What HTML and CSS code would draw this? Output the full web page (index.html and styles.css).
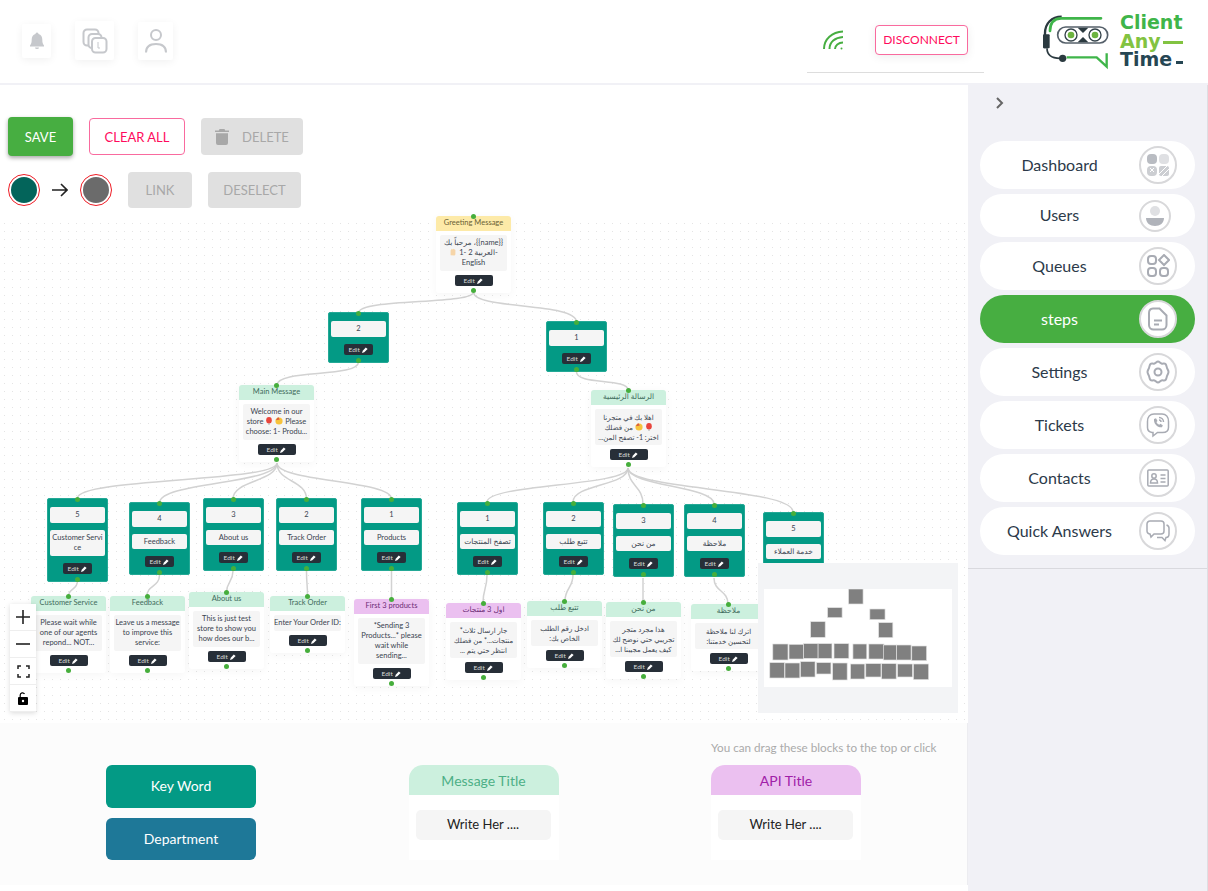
FILE: index.html
```html
<!DOCTYPE html>
<html>

<head>
    <meta charset="UTF-8">
    <title>Client Any Time - Steps</title>
    <link rel="stylesheet" href="styles.css">
</head>

<body>
    <header class="topbar">
        <div class="top-icons">
            <div class="top-icon bell-box">
                <svg width="20" height="20" viewBox="0 0 20 20"><path fill="#c6c8cc" d="M10 1.5a1.5 1.5 0 0 1 1.5 1.6c2.6.7 3.8 2.9 3.8 5.5 0 2.8.4 4.3 1.700 5.9v.9H3v-.9c1.300-1.600 1.700-3.100 1.700-5.900 0-2.600 1.200-4.800 3.800-5.500A1.500 1.500 0 0 1 10 1.500zM8 16.500h4a2 1.500 0 0 1-4 0z"/></svg>
            </div>
            <div class="top-icon copy-box">
                <svg width="26" height="26" viewBox="0 0 26 26" fill="none" stroke="#c6c8cc" stroke-width="2"><path d="M7 17.500H5a3.500 3.500 0 0 1-3.500-3.500V5A3.500 3.500 0 0 1 5 1.500h8A3.500 3.500 0 0 1 16.500 5v1"/><rect x="6.500" y="6" width="13" height="14" rx="3.500"/><rect x="10" y="10" width="14.500" height="14.500" rx="3.500" fill="#fff"/><path stroke-width="1" d="M16 14v6h2"/></svg>
            </div>
            <div class="top-icon user-box">
                <svg width="24" height="26" viewBox="0 0 24 26" fill="none" stroke="#c6c8cc" stroke-width="2"><circle cx="12" cy="7" r="5"/><path d="M2 24.500c0-5.500 3.500-8.500 10-8.500s10 3 10 8.500"/></svg>
            </div>
        </div>
        <div class="conn-box">
            <svg class="wifi" width="20" height="20" viewBox="0 0 20 20" fill="none" stroke="#47ae41" stroke-width="2"><path d="M1 19C1 9 9 2 20 1.500"/><path d="M6.500 19C6.500 12 12 7.500 20 7"/><path d="M12 19c0-3.500 3.500-6.500 8-6.500"/><circle cx="18.500" cy="18.500" r="1" fill="#47ae41" stroke="none"/></svg>
            <button class="btn-outline disconnect">DISCONNECT</button>
        </div>
        <div class="logo">
            <svg width="80" height="70" viewBox="0 0 240 210" fill="none">
                <path d="M80 35C50 35 30 55 30 85V130" stroke="#2b3a40" stroke-width="7"/>
                <rect x="24" y="88" width="20" height="42" rx="3" fill="#2b3a40"/>
                <path d="M36 130C36 150 50 160 75 160" stroke="#2b3a40" stroke-width="5"/>
                <circle cx="83" cy="160" r="11" fill="#2b3a40"/>
                <path d="M45 78C45 55 55 41 78 40H198" stroke="#3fb54a" stroke-width="8" stroke-linecap="round"/>
                <path d="M95 157H185L215 185V145" stroke="#3fb54a" stroke-width="7"/>
                <rect x="68" y="66" width="150" height="48" rx="24" stroke="#55606a" stroke-width="5" fill="#fff"/>
                <path d="M128 68h32l-16 16zM128 112h32l-16-16z" fill="#2b3a40"/>
                <circle cx="108" cy="90" r="18" fill="#fff" stroke="#33424a" stroke-width="4"/>
                <circle cx="180" cy="90" r="18" fill="#fff" stroke="#33424a" stroke-width="4"/>
                <circle cx="108" cy="90" r="10" fill="#6cb33f"/>
                <circle cx="180" cy="90" r="10" fill="#6cb33f"/>
            </svg>
            <div class="logo-text">
                <div class="logo-client">Client</div>
                <div class="logo-any">Any<span class="logo-bar"></span></div>
                <div class="logo-time">Time<span class="logo-dash"></span></div>
            </div>
        </div>
    </header>

    <div class="page">
        <main class="workspace">
            <section class="toolbar">
                <div class="tool-row">
                    <button class="btn-save">SAVE</button>
                    <button class="btn-outline clear">CLEAR ALL</button>
                    <button class="btn-off delete">
                        <svg width="14" height="16" viewBox="0 0 14 16" fill="#a8a8a8"><path d="M4.500 0h5l.7 1.500H14V3H0V1.500h3.800zM1 4.200h12V14a2 2 0 0 1-2 2H3a2 2 0 0 1-2-2z"/></svg>
                        DELETE
                    </button>
                </div>
                <div class="tool-row second">
                    <div class="pick-group">
                        <span class="pick pick-from"></span>
                        <svg width="16" height="14" viewBox="0 0 16 14" fill="none" stroke="#222" stroke-width="1.600"><path d="M0 7h15M9 1l6 6-6 6"/></svg>
                        <span class="pick pick-to"></span>
                    </div>
                    <button class="btn-off link">LINK</button>
                    <button class="btn-off deselect">DESELECT</button>
                </div>
            </section>

            <section class="canvas">
                <svg class="edges" width="968" height="504" viewBox="0 219 968 504" fill="none" stroke="#d2d2d2" stroke-width="1.500">
                    <path d="M473.500 292C473.500 305 358.500 298 358.500 313"/>
                    <path d="M473.500 292C473.500 310 576.500 302 576.500 322"/>
                    <path d="M358.500 362C358.500 378 277 369 277 385"/>
                    <path d="M576.500 372C576.500 385 628 378 628 390"/>
                    <path d="M277 463C277 482 77.500 478 77.500 498"/>
                    <path d="M277 463C277 484 159.500 482 159.500 503"/>
                    <path d="M277 463C277 482 233 480 233 499"/>
                    <path d="M277 463C277 482 306.500 480 306.500 499"/>
                    <path d="M277 463C277 482 391.500 480 391.500 499"/>
                    <path d="M628 468C628 486 487 484 487 502"/>
                    <path d="M628 468C628 486 573 484 573 502"/>
                    <path d="M628 468C628 486 643 486 643 504"/>
                    <path d="M628 468C628 486 714 486 714 504"/>
                    <path d="M628 468C628 490 793 488 793 512"/>
                    <path d="M77.500 581C77.500 590 68.500 588 68.500 596"/>
                    <path d="M159.500 575C159.500 587 147 585 147 596"/>
                    <path d="M233 571C233 582 226.500 582 226.500 592"/>
                    <path d="M306.500 571C306.500 584 307.500 584 307.500 596"/>
                    <path d="M391.500 571V599"/>
                    <path d="M487 575C487 589 483 589 483 603"/>
                    <path d="M573 575C573 588 565 588 565 601"/>
                    <path d="M643 578V602"/>
                    <path d="M714 578C714 592 728 590 728 604"/>
                </svg>

                <div class="node msg" style="left:436px;top:-3px">
                    <div class="msg-head yellow">Greeting Message</div>
                    <div class="msg-text">مرحباً بك ،{{name}}<br><svg class="emo" viewBox="0 0 10 10"><path fill="#f6d5a8" d="M2 9V3l1.500-2 1 1 1.500-1 1 1 1 .5V8L7 9.500z"/></svg> 1- 2 العربية-<br>English</div>
                    <button class="edit-btn">Edit <svg class="pen" viewBox="0 0 8 8"><path d="M0 8l1-3 4-4.500 2.500 2L3 7z"/></svg></button>
                    <i class="handle top"></i><i class="handle bottom"></i>
                </div>

                <div class="node key" style="left:328px;top:93px">
                    <div class="key-field">2</div>
                    <button class="edit-btn">Edit <svg class="pen" viewBox="0 0 8 8"><path d="M0 8l1-3 4-4.500 2.500 2L3 7z"/></svg></button>
                    <i class="handle top"></i><i class="handle bottom"></i>
                </div>
                <div class="node key" style="left:546px;top:102px">
                    <div class="key-field">1</div>
                    <button class="edit-btn">Edit <svg class="pen" viewBox="0 0 8 8"><path d="M0 8l1-3 4-4.500 2.500 2L3 7z"/></svg></button>
                    <i class="handle top"></i><i class="handle bottom"></i>
                </div>

                <div class="node msg" style="left:239px;top:166px">
                    <div class="msg-head green">Main Message</div>
                    <div class="msg-text">Welcome in our<br>store <svg class="emo" viewBox="0 0 10 10"><ellipse cx="5" cy="4" rx="3.500" ry="4" fill="#e8453c"/><path d="M5 8v2" stroke="#999"/></svg> <svg class="emo" viewBox="0 0 10 10"><circle cx="5" cy="5" r="4.500" fill="#f7c33c"/><path d="M1 4l3-4 2 3z" fill="#d9573f"/></svg> Please<br>choose: 1- Produ...</div>
                    <button class="edit-btn">Edit <svg class="pen" viewBox="0 0 8 8"><path d="M0 8l1-3 4-4.500 2.500 2L3 7z"/></svg></button>
                    <i class="handle top"></i><i class="handle bottom"></i>
                </div>
                <div class="node msg" style="left:591px;top:171px">
                    <div class="msg-head green">الرسالة الرئيسية</div>
                    <div class="msg-text" dir="rtl">اهلا بك في متجرنا<br><svg class="emo" viewBox="0 0 10 10"><ellipse cx="5" cy="4" rx="3.500" ry="4" fill="#e8453c"/><path d="M5 8v2" stroke="#999"/></svg> <svg class="emo" viewBox="0 0 10 10"><circle cx="5" cy="5" r="4.500" fill="#f7c33c"/><path d="M1 4l3-4 2 3z" fill="#d9573f"/></svg> من فضلك<br>اختر: 1- تصفح المن...</div>
                    <button class="edit-btn">Edit <svg class="pen" viewBox="0 0 8 8"><path d="M0 8l1-3 4-4.500 2.500 2L3 7z"/></svg></button>
                    <i class="handle top"></i><i class="handle bottom"></i>
                </div>

                <div class="node key" style="left:47px;top:279px">
                    <div class="key-field">5</div>
                    <div class="key-field tall">Customer Servi<br>ce</div>
                    <button class="edit-btn">Edit <svg class="pen" viewBox="0 0 8 8"><path d="M0 8l1-3 4-4.500 2.500 2L3 7z"/></svg></button>
                    <i class="handle top"></i><i class="handle bottom"></i>
                </div>
                <div class="node key" style="left:129px;top:283px">
                    <div class="key-field">4</div>
                    <div class="key-field">Feedback</div>
                    <button class="edit-btn">Edit <svg class="pen" viewBox="0 0 8 8"><path d="M0 8l1-3 4-4.500 2.500 2L3 7z"/></svg></button>
                    <i class="handle top"></i><i class="handle bottom"></i>
                </div>
                <div class="node key" style="left:203px;top:279px">
                    <div class="key-field">3</div>
                    <div class="key-field">About us</div>
                    <button class="edit-btn">Edit <svg class="pen" viewBox="0 0 8 8"><path d="M0 8l1-3 4-4.500 2.500 2L3 7z"/></svg></button>
                    <i class="handle top"></i><i class="handle bottom"></i>
                </div>
                <div class="node key" style="left:276px;top:279px">
                    <div class="key-field">2</div>
                    <div class="key-field">Track Order</div>
                    <button class="edit-btn">Edit <svg class="pen" viewBox="0 0 8 8"><path d="M0 8l1-3 4-4.500 2.500 2L3 7z"/></svg></button>
                    <i class="handle top"></i><i class="handle bottom"></i>
                </div>
                <div class="node key" style="left:361px;top:279px">
                    <div class="key-field">1</div>
                    <div class="key-field">Products</div>
                    <button class="edit-btn">Edit <svg class="pen" viewBox="0 0 8 8"><path d="M0 8l1-3 4-4.500 2.500 2L3 7z"/></svg></button>
                    <i class="handle top"></i><i class="handle bottom"></i>
                </div>

                <div class="node key" style="left:457px;top:283px">
                    <div class="key-field">1</div>
                    <div class="key-field">تصفح المنتجات</div>
                    <button class="edit-btn">Edit <svg class="pen" viewBox="0 0 8 8"><path d="M0 8l1-3 4-4.500 2.500 2L3 7z"/></svg></button>
                    <i class="handle top"></i><i class="handle bottom"></i>
                </div>
                <div class="node key" style="left:543px;top:283px">
                    <div class="key-field">2</div>
                    <div class="key-field">تتبع طلب</div>
                    <button class="edit-btn">Edit <svg class="pen" viewBox="0 0 8 8"><path d="M0 8l1-3 4-4.500 2.500 2L3 7z"/></svg></button>
                    <i class="handle top"></i><i class="handle bottom"></i>
                </div>
                <div class="node key" style="left:613px;top:285px">
                    <div class="key-field">3</div>
                    <div class="key-field">من نحن</div>
                    <button class="edit-btn">Edit <svg class="pen" viewBox="0 0 8 8"><path d="M0 8l1-3 4-4.500 2.500 2L3 7z"/></svg></button>
                    <i class="handle top"></i><i class="handle bottom"></i>
                </div>
                <div class="node key" style="left:684px;top:285px">
                    <div class="key-field">4</div>
                    <div class="key-field">ملاحظة</div>
                    <button class="edit-btn">Edit <svg class="pen" viewBox="0 0 8 8"><path d="M0 8l1-3 4-4.500 2.500 2L3 7z"/></svg></button>
                    <i class="handle top"></i><i class="handle bottom"></i>
                </div>
                <div class="node key" style="left:763px;top:293px">
                    <div class="key-field">5</div>
                    <div class="key-field">خدمة العملاء</div>
                    <button class="edit-btn">Edit <svg class="pen" viewBox="0 0 8 8"><path d="M0 8l1-3 4-4.500 2.500 2L3 7z"/></svg></button>
                    <i class="handle top"></i><i class="handle bottom"></i>
                </div>

                <div class="node msg" style="left:31px;top:377px">
                    <div class="msg-head green">Customer Service</div>
                    <div class="msg-text">Please wait while<br>one of our agents<br>repond... NOT...</div>
                    <button class="edit-btn">Edit <svg class="pen" viewBox="0 0 8 8"><path d="M0 8l1-3 4-4.500 2.500 2L3 7z"/></svg></button>
                    <i class="handle top"></i><i class="handle bottom"></i>
                </div>
                <div class="node msg" style="left:110px;top:377px">
                    <div class="msg-head green">Feedback</div>
                    <div class="msg-text">Leave us a message<br>to improve this<br>service:</div>
                    <button class="edit-btn">Edit <svg class="pen" viewBox="0 0 8 8"><path d="M0 8l1-3 4-4.500 2.500 2L3 7z"/></svg></button>
                    <i class="handle top"></i><i class="handle bottom"></i>
                </div>
                <div class="node msg" style="left:189px;top:373px">
                    <div class="msg-head green">About us</div>
                    <div class="msg-text">This is just test<br>store to show you<br>how does our b...</div>
                    <button class="edit-btn">Edit <svg class="pen" viewBox="0 0 8 8"><path d="M0 8l1-3 4-4.500 2.500 2L3 7z"/></svg></button>
                    <i class="handle top"></i><i class="handle bottom"></i>
                </div>
                <div class="node msg" style="left:270px;top:377px">
                    <div class="msg-head green">Track Order</div>
                    <div class="msg-text">Enter Your Order ID:</div>
                    <button class="edit-btn">Edit <svg class="pen" viewBox="0 0 8 8"><path d="M0 8l1-3 4-4.500 2.500 2L3 7z"/></svg></button>
                    <i class="handle top"></i><i class="handle bottom"></i>
                </div>
                <div class="node msg" style="left:354px;top:380px">
                    <div class="msg-head purple">First 3 products</div>
                    <div class="msg-text">*Sending 3<br>Products...* please<br>wait while<br>sending...</div>
                    <button class="edit-btn">Edit <svg class="pen" viewBox="0 0 8 8"><path d="M0 8l1-3 4-4.500 2.500 2L3 7z"/></svg></button>
                    <i class="handle top"></i><i class="handle bottom"></i>
                </div>
                <div class="node msg" style="left:446px;top:384px">
                    <div class="msg-head purple">اول 3 منتجات</div>
                    <div class="msg-text" dir="rtl">جار ارسال ثلاث*<br>منتجات...* من فضلك<br>انتظر حتي يتم ...</div>
                    <button class="edit-btn">Edit <svg class="pen" viewBox="0 0 8 8"><path d="M0 8l1-3 4-4.500 2.500 2L3 7z"/></svg></button>
                    <i class="handle top"></i><i class="handle bottom"></i>
                </div>
                <div class="node msg" style="left:527px;top:382px">
                    <div class="msg-head green">تتبع طلب</div>
                    <div class="msg-text" dir="rtl">ادخل رقم الطلب<br>الخاص بك:</div>
                    <button class="edit-btn">Edit <svg class="pen" viewBox="0 0 8 8"><path d="M0 8l1-3 4-4.500 2.500 2L3 7z"/></svg></button>
                    <i class="handle top"></i><i class="handle bottom"></i>
                </div>
                <div class="node msg" style="left:606px;top:383px">
                    <div class="msg-head green">من نحن</div>
                    <div class="msg-text" dir="rtl">هذا مجرد متجر<br>تجريبي حتي نوضح لك<br>كيف يعمل مجيبنا ا...</div>
                    <button class="edit-btn">Edit <svg class="pen" viewBox="0 0 8 8"><path d="M0 8l1-3 4-4.500 2.500 2L3 7z"/></svg></button>
                    <i class="handle top"></i><i class="handle bottom"></i>
                </div>
                <div class="node msg" style="left:691px;top:385px">
                    <div class="msg-head green">ملاحظة</div>
                    <div class="msg-text" dir="rtl">اترك لنا ملاحظة<br>لتحسين خدمتنا:</div>
                    <button class="edit-btn">Edit <svg class="pen" viewBox="0 0 8 8"><path d="M0 8l1-3 4-4.500 2.500 2L3 7z"/></svg></button>
                    <i class="handle top"></i><i class="handle bottom"></i>
                </div>

                <div class="controls">
                    <button class="ctl">
                        <svg width="14" height="14" viewBox="0 0 14 14" stroke="#222" stroke-width="1.600"><path d="M7 0v14M0 7h14"/></svg>
                    </button>
                    <button class="ctl">
                        <svg width="14" height="14" viewBox="0 0 14 14" stroke="#222" stroke-width="1.600"><path d="M0 7h14"/></svg>
                    </button>
                    <button class="ctl">
                        <svg width="13" height="13" viewBox="0 0 13 13" fill="none" stroke="#222" stroke-width="1.500"><path d="M1 4V1h3M9 1h3v3M12 9v3H9M4 12H1V9"/></svg>
                    </button>
                    <button class="ctl">
                        <svg width="10" height="13" viewBox="0 0 10 13"><path d="M2.200 5V3a2.300 2.300 0 0 1 4.300-1" fill="none" stroke="#000" stroke-width="1.200"/><path d="M1 5h8a1 1 0 0 1 1 1v6a1 1 0 0 1-1 1H1a1 1 0 0 1-1-1V6a1 1 0 0 1 1-1z"/><circle cx="5" cy="9" r="1.200" fill="#fff"/></svg>
                    </button>
                </div>

                <div class="minimap">
                    <svg class="mini-view" width="188" height="98" viewBox="959 327 556 294" preserveAspectRatio="none" fill="#808080" stroke="#e2e2e2" stroke-width="2">
                        <rect x="1209" y="327" width="43" height="45"/>
                        <rect x="1147" y="383" width="43" height="30"/>
                        <rect x="1272" y="387" width="45" height="32"/>
                        <rect x="1097" y="425" width="43" height="47"/>
                        <rect x="1298" y="428" width="42" height="45"/>
                        <rect x="985" y="492" width="45" height="48"/>
                        <rect x="1033" y="493" width="43" height="44"/>
                        <rect x="1076" y="491" width="43" height="44"/>
                        <rect x="1119" y="491" width="41" height="44"/>
                        <rect x="1166" y="491" width="44" height="44"/>
                        <rect x="1222" y="492" width="41" height="45"/>
                        <rect x="1269" y="492" width="45" height="45"/>
                        <rect x="1312" y="495" width="39" height="45"/>
                        <rect x="1351" y="495" width="43" height="45"/>
                        <rect x="1396" y="498" width="44" height="44"/>
                        <rect x="976" y="548" width="44" height="46"/>
                        <rect x="1021" y="549" width="44" height="45"/>
                        <rect x="1067" y="545" width="43" height="46"/>
                        <rect x="1114" y="548" width="43" height="34"/>
                        <rect x="1162" y="549" width="43" height="51"/>
                        <rect x="1215" y="552" width="42" height="45"/>
                        <rect x="1260" y="551" width="45" height="40"/>
                        <rect x="1307" y="551" width="43" height="46"/>
                        <rect x="1354" y="552" width="44" height="39"/>
                        <rect x="1401" y="552" width="45" height="47"/>
                    </svg>
                </div>
            </section>

            <section class="palette">
                <p class="hint">You can drag these blocks to the top or click</p>
                <div class="key-blocks">
                    <div class="block-btn keyword">Key Word</div>
                    <div class="block-btn department">Department</div>
                </div>
                <div class="block-card">
                    <div class="card-head green-card">Message Title</div>
                    <div class="card-field">Write Her ....</div>
                </div>
                <div class="block-card">
                    <div class="card-head purple-card">API Title</div>
                    <div class="card-field">Write Her ....</div>
                </div>
            </section>
        </main>

        <aside class="sidebar">
            <div class="side-toggle">
                <svg width="8" height="12" viewBox="0 0 8 12" fill="none" stroke="#666" stroke-width="2"><path d="M1 1l5 5-5 5"/></svg>
            </div>
            <nav class="side-nav">
                <a class="nav-item">
                    <span class="nav-label">Dashboard</span>
                    <span class="nav-icon">
                        <svg width="24" height="24" viewBox="0 0 24 24"><rect x="1" y="1" width="10" height="10" rx="4" fill="#b9bcc2"/><rect x="13" y="1" width="10" height="10" rx="4" fill="#dfe0e3"/><rect x="1" y="13" width="10" height="10" rx="4" fill="#ccced2"/><path d="M4 15l4 4M8 15l-4 4" stroke="#fff"/><rect x="13" y="13" width="10" height="10" rx="2" fill="#ccced2"/><path d="M13 21l8-8M16 23l7-7" stroke="#fff"/></svg>
                    </span>
                </a>
                <a class="nav-item short">
                    <span class="nav-label">Users</span>
                    <span class="nav-icon small">
                        <svg width="20" height="22" viewBox="0 0 20 22"><circle cx="10" cy="6" r="5" fill="#dfe0e3"/><path d="M1 13h18c0 5-4 8-9 8s-9-3-9-8z" fill="#b0b3ba"/></svg>
                    </span>
                </a>
                <a class="nav-item">
                    <span class="nav-label">Queues</span>
                    <span class="nav-icon">
                        <svg width="24" height="24" viewBox="0 0 24 24" fill="none" stroke="#a8abb3" stroke-width="2"><rect x="2" y="2" width="8" height="8" rx="3"/><path d="M18 1l5 5-5 5-5-5z"/><rect x="2" y="14" width="8" height="8" rx="3"/><rect x="14" y="14" width="8" height="8" rx="3"/></svg>
                    </span>
                </a>
                <a class="nav-item active">
                    <span class="nav-label">steps</span>
                    <span class="nav-icon">
                        <svg width="20" height="24" viewBox="0 0 20 24" fill="none" stroke="#a8abb3" stroke-width="2"><path d="M5 1.500h6.500l7 7V18a4.500 4.500 0 0 1-4.500 4.500H5.500A4.500 4.500 0 0 1 1 18V6a4.500 4.500 0 0 1 4-4.500z"/><path d="M6 13.500h8M6 17.500h5"/></svg>
                    </span>
                </a>
                <a class="nav-item">
                    <span class="nav-label">Settings</span>
                    <span class="nav-icon">
                        <svg width="24" height="24" viewBox="0 0 24 24" fill="none" stroke="#a8abb3" stroke-width="2"><path d="M12 1.500c1.500 0 2 1.500 3.500 2s3-.5 4 .5 1 2.500 1.500 4 1.500 2.500 1.500 4-1 2.500-1.500 4-.5 3-1.500 4-2.500 0-4 .5-2 2-3.500 2-2-1.500-3.500-2-3 .5-4-.5-1-2.500-1.500-4-1.500-2.500-1.500-4 1-2.500 1.500-4 .5-3 1.500-4 2.500 0 4-.5 2-2 3.500-2z"/><circle cx="12" cy="12" r="3.500"/></svg>
                    </span>
                </a>
                <a class="nav-item">
                    <span class="nav-label">Tickets</span>
                    <span class="nav-icon">
                        <svg width="24" height="26" viewBox="0 0 24 26" fill="none" stroke="#a8abb3" stroke-width="1.500"><path d="M7 20.500h-1C3 20 1.500 18 1.500 15.500v-6C1.500 5 4 2 8 2h8c4 0 6.500 3 6.500 7.500v6c0 3-2 5-6 5h-5L7 24z"/><path fill="#a8abb3" stroke="none" d="M8 7l2-.7 1.500 2.700-1 1c.5 1.300 1.500 2.300 2.800 2.800l1-1 2.500 1.500-.8 2c-4.500.5-8.500-3.500-8-8.300z"/><path d="M13 5.500c2.500 0 4.500 2 4.500 4.500M13 8c1.200 0 2 .8 2 2"/></svg>
                    </span>
                </a>
                <a class="nav-item">
                    <span class="nav-label">Contacts</span>
                    <span class="nav-icon">
                        <svg width="22" height="18" viewBox="0 0 22 18" fill="none" stroke="#a8abb3" stroke-width="1.500"><rect x=".8" y="1" width="20.400" height="16" rx="1"/><circle cx="7" cy="7" r="2.200"/><path d="M3.500 14c0-3 1.500-4 3.500-4s3.500 1 3.500 4zM13.500 6h5M13.500 9.500h5M13.500 13h5"/></svg>
                    </span>
                </a>
                <a class="nav-item">
                    <span class="nav-label">Quick Answers</span>
                    <span class="nav-icon">
                        <svg width="24" height="22" viewBox="0 0 24 22" fill="none" stroke="#a8abb3" stroke-width="1.500"><path d="M4 1h11a3 3 0 0 1 3 3v7a3 3 0 0 1-3 3H8l-3 3-1-3a3 3 0 0 1-3-3V4a3 3 0 0 1 3-3z"/><path d="M20.500 5c1.500.5 2.500 1.500 2.500 3v6c0 2-1 3.500-3 3.500l-1 3-3-3h-5"/></svg>
                    </span>
                </a>
            </nav>
        </aside>
    </div>
</body>

</html>
```
FILE: styles.css
```css
* {
    box-sizing: border-box;
}

body {
    margin: 0;
    width: 1208px;
    height: 891px;
    overflow: hidden;
    background-color: #fff;
    font-family: Lato, "DejaVu Sans", sans-serif;
    color: #2c3a4a;
}

button {
    font-family: inherit;
    border: none;
    padding: 0;
}

/* header */
.topbar {
    display: flex;
    height: 85px;
    border-bottom: 2px solid #f1f1f6;
}

.top-icons {
    display: flex;
    align-items: flex-start;
    width: 807px;
    padding: 21px 0 0 22px;
}

.top-icon {
    display: flex;
    align-items: center;
    justify-content: center;
    background-color: #fff;
    box-shadow: 0 2px 8px rgba(0, 0, 0, 0.06);
    border-radius: 2px;
}

.bell-box {
    width: 29px;
    height: 34px;
    margin-top: 3px;
}

.copy-box {
    width: 39px;
    height: 39px;
    margin-left: 24px;
}

.user-box {
    width: 35px;
    height: 38px;
    margin-left: 24px;
    margin-top: 1px;
}

.conn-box {
    display: flex;
    align-items: center;
    width: 177px;
    height: 73px;
    padding: 7px 0 0 16px;
    border-bottom: 1px solid #ddd;
}

.disconnect {
    width: 93px;
    height: 30px;
    margin-left: 32px;
    margin-right: -16px;
    font-size: 12px;
    box-shadow: 0 2px 10px rgba(0, 0, 0, 0.07);
    flex-shrink: 0;
}

.logo {
    display: flex;
    padding: 5px 0 0 51px;
    width: 224px;
}

.logo svg {
    flex-shrink: 0;
}

.logo-text {
    width: 63px;
    height: 62px;
    margin-left: 5px;
    padding-top: 8px;
    font-family: "DejaVu Sans", sans-serif;
    font-weight: bold;
    font-size: 19px;
    line-height: 18.5px;
}

.logo-client {
    color: #3fb54a;
}

.logo-any {
    display: flex;
    align-items: center;
    color: #82c341;
}

.logo-bar {
    flex: 1;
    height: 3px;
    margin: 3px 0 0 2px;
    background-color: #82c341;
}

.logo-time {
    display: flex;
    align-items: center;
    color: #264653;
}

.logo-dash {
    width: 7px;
    height: 3px;
    margin: 6px 0 0 auto;
    background-color: #264653;
}

/* page */
.page {
    display: flex;
    height: 806px;
}

.workspace {
    display: flex;
    flex-direction: column;
    width: 968px;
}

.toolbar {
    height: 134px;
    padding: 32px 0 0 8px;
}

.tool-row {
    display: flex;
    align-items: center;
    gap: 16px;
    font-size: 13px;
}

.second {
    margin-top: 16px;
}

.btn-save {
    width: 65px;
    height: 39px;
    background-color: #47ae41;
    color: #fff;
    font-size: 13px;
    border-radius: 4px;
    box-shadow: 0 2px 4px rgba(0, 0, 0, 0.35);
}

.btn-outline {
    background-color: #fff;
    color: #ff0a5c;
    border: 1px solid #f96a9e;
    border-radius: 4px;
}

.clear {
    width: 96px;
    height: 37px;
    font-size: 13px;
}

.btn-off {
    display: flex;
    align-items: center;
    justify-content: center;
    background-color: #e0e0e0;
    color: #a8a8a8;
    font-size: 13px;
    border-radius: 4px;
}

.delete {
    width: 102px;
    height: 37px;
    gap: 13px;
}

.link {
    width: 64px;
    height: 36px;
}

.deselect {
    width: 93px;
    height: 36px;
}

.pick-group {
    display: flex;
    align-items: center;
    gap: 12px;
}

.pick {
    width: 32px;
    height: 32px;
    border-radius: 50%;
    border: 3px solid #fff;
    outline: 1px solid #ee1c25;
    outline-offset: -1px;
}

.pick-from {
    background-color: #03645a;
}

.pick-to {
    background-color: #6b6b6b;
}

/* flow canvas */
.canvas {
    position: relative;
    height: 504px;
    background-color: #fff;
    background-image: radial-gradient(circle at 4.5px 4.5px, #e4e4e4 0.7px, transparent 1px);
    background-size: 8px 8px;
}

.edges {
    position: absolute;
    left: 0;
    top: 0;
}

.node {
    position: absolute;
    text-align: center;
    font-size: 7.5px;
    border-radius: 3px;
}

.msg {
    width: 75px;
    padding-bottom: 7px;
    background-color: #fff;
    box-shadow: 0 2px 10px rgba(0, 0, 0, 0.04);
}

.msg-head {
    height: 15px;
    line-height: 14px;
    border-radius: 3px 3px 0 0;
    color: #3f6b5c;
}

.yellow {
    background-color: #fdeaa8;
    color: #6a5f35;
}

.green {
    background-color: #ccf0de;
}

.purple {
    background-color: #ebc0f0;
    color: #6b2c75;
}

.msg-text {
    margin: 4px;
    padding: 3px 0;
    line-height: 10px;
    background-color: #f5f5f5;
    border-radius: 2px;
    white-space: nowrap;
    overflow: hidden;
    color: #3a4450;
}

.msg-text[dir="rtl"] {
    font-size: 7px;
    text-align: center;
}

.emo {
    width: 8px;
    height: 8px;
    vertical-align: -1px;
}

.edit-btn {
    display: block;
    width: 38px;
    height: 11px;
    margin: 0 auto;
    background-color: #272f38;
    color: #ddd;
    font-size: 6.5px;
    line-height: 11px;
    border-radius: 2px;
}

.pen {
    width: 6px;
    height: 6px;
    margin-left: 1px;
    fill: #fff;
    vertical-align: -0.5px;
}

.key {
    width: 61px;
    padding: 8px 2px 7px;
    background-color: #039a85;
    border: 1px solid #24a996;
    border-radius: 2px;
}

.key-field {
    min-height: 16px;
    margin-bottom: 7px;
    padding: 3px 0;
    line-height: 10px;
    background-color: #f5f5f5;
    border-radius: 2px;
    white-space: nowrap;
    overflow: hidden;
    color: #3a4450;
}

.key-field + .key-field {
    min-height: 15px;
    padding: 2.5px 0;
}

.key-field.tall {
    min-height: 26px;
}

.key .edit-btn {
    width: 29px;
    margin-top: 1px;
}

.handle {
    position: absolute;
    left: 50%;
    width: 5px;
    height: 5px;
    margin-left: -2.5px;
    border-radius: 50%;
    background-color: #46ae3c;
}

.handle.top {
    top: -2px;
}

.handle.bottom {
    bottom: -1px;
}

.msg .handle.bottom {
    bottom: 0;
}

.controls {
    position: absolute;
    left: 10px;
    bottom: 11px;
    width: 26px;
    box-shadow: 0 1px 5px rgba(0, 0, 0, 0.15);
}

.ctl {
    display: flex;
    align-items: center;
    justify-content: center;
    width: 26px;
    height: 27px;
    background-color: #fff;
    border-bottom: 1px solid #eee;
}

.minimap {
    position: absolute;
    right: 10px;
    bottom: 10px;
    width: 200px;
    height: 150px;
    padding: 26px 6px;
    background-color: #f3f4f6;
}

.mini-view {
    display: block;
    background-color: #fff;
}

/* blocks under the canvas */
.palette {
    display: grid;
    grid-template-columns: 150px 150px 150px;
    grid-template-rows: 26px auto;
    column-gap: 152.5px;
    height: 162px;
    padding: 16px 0 0 106px;
    background-color: #fcfcfc;
    border-right: 1px solid #ececf0;
}

.hint {
    grid-column: 3;
    grid-row: 1;
    margin: 0;
    line-height: 16px;
    font-size: 11.7px;
    color: #aaa;
    white-space: nowrap;
}

.key-blocks {
    display: flex;
    flex-direction: column;
    gap: 10px;
    grid-row: 2;
}

.block-btn {
    display: flex;
    align-items: center;
    justify-content: center;
    padding-bottom: 2px;
    color: #fff;
    font-size: 14px;
    border-radius: 6px;
}

.keyword {
    height: 43px;
    background-color: #039a85;
}

.department {
    height: 42px;
    background-color: #1e7898;
}

.block-card {
    grid-row: 2;
    height: 95px;
    background-color: #fff;
    border-radius: 14px 14px 0 0;
}

.card-head {
    height: 30px;
    line-height: 32px;
    text-align: center;
    font-size: 14px;
    border-radius: 14px 14px 0 0;
}

.green-card {
    background-color: #ccf0de;
    color: #4caf86;
}

.purple-card {
    background-color: #ebc0f0;
    color: #a020a8;
}

.card-field {
    height: 30px;
    margin: 15px 8px 0 7px;
    line-height: 29px;
    text-align: center;
    font-size: 13px;
    color: #222;
    background-color: #f5f5f5;
    border-radius: 5px;
}

/* right sidebar */
.sidebar {
    width: 240px;
    background-color: #f1f1f6;
    border-right: 1px solid #dedee2;
}

.side-toggle {
    height: 36px;
    padding: 12px 0 0 28px;
}

.side-toggle svg {
    display: block;
}

.side-nav {
    display: flex;
    flex-direction: column;
    gap: 5px;
    margin-top: 20px;
    padding: 0 12px 13px;
    border-bottom: 1px solid #d9d9de;
}

.nav-item {
    display: flex;
    align-items: center;
    height: 48px;
    padding-right: 18px;
    background-color: #fff;
    border-radius: 24px;
    font-size: 16px;
}

.nav-item.short {
    height: 43px;
}

.nav-label {
    flex: 1;
    padding-bottom: 2px;
    text-align: center;
}

.nav-icon {
    display: flex;
    align-items: center;
    justify-content: center;
    width: 38px;
    height: 38px;
    border: 2px solid #d8d8da;
    border-radius: 50%;
    background-color: #fff;
}

.nav-icon.small {
    width: 32px;
    height: 32px;
    margin-right: 6px;
}

.active {
    background-color: #47ae41;
    color: #fff;
}
```
